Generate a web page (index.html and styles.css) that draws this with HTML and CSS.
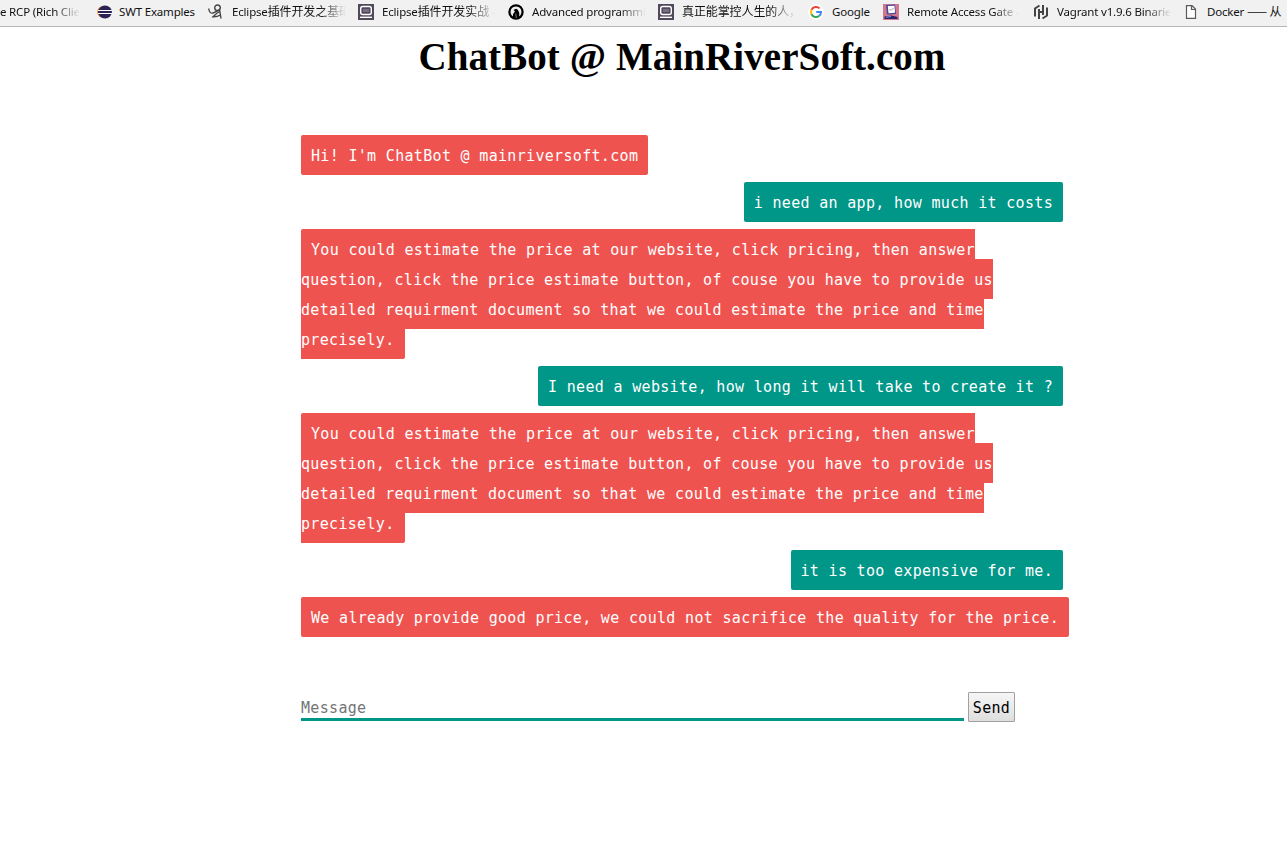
FILE: index.html
```
<!DOCTYPE html>
<html lang="en">
<head>
<meta charset="utf-8">
<title>ChatBot @ MainRiverSoft.com</title>
<link rel="stylesheet" href="styles.css">
</head>
<body>
<nav class="bookmarks">
  <a class="bookmark first"><span class="label fade">e RCP (Rich Clie</span></a>
  <a class="bookmark mid"><svg class="icon" viewBox="0 0 16 16"><ellipse cx="6.500" cy="8" rx="6.500" ry="6" fill="#f29a3c"/><ellipse cx="8" cy="8" rx="7" ry="6.500" fill="#2c2255"/><path d="M1 6.500h14M1 9.500h14" stroke="#fff" stroke-width="1.200"/></svg><span class="label">SWT Examples</span></a>
  <a class="bookmark"><svg class="icon" viewBox="0 0 16 16" fill="none" stroke="#444" stroke-width="1.400"><circle cx="9.500" cy="3.800" r="2.800"/><path d="M.7 4.500Q1.500 10 5 9Q9 7.500 11.500 5.500L13 14.500M11.500 7.500Q8 9.500 5 12.800Q9 13 12.500 11"/></svg><span class="label fade">Eclipse<b class="cjk">插件开发之基础</b></span></a>
  <a class="bookmark"><svg class="icon" viewBox="0 0 16 16"><path d="M0 0h16v16H0z" fill="#51485b"/><rect x="2.700" y="2.500" width="10.600" height="8" rx="2" fill="none" stroke="#fff" stroke-width="1.400"/><path d="M5 5h6v3H5z" fill="#766e80"/><path d="M2 13.300h12" stroke="#fff" stroke-width="1.400"/></svg><span class="label fade">Eclipse<b class="cjk">插件开发实战</b> -</span></a>
  <a class="bookmark"><svg class="icon" viewBox="0 0 16 16"><circle cx="8" cy="8" r="7.700" fill="#000"/><path d="M4.800 12.500Q1.500 9.500 3 5.500Q4.500 2.500 8 2.500Q11.500 2.500 13 5.500Q14.500 9.500 11.200 12.500Q12 9 10.500 7L9.500 5.500L8 4.800L5.500 6L7 7.500Q5 9 4.800 12.500z" fill="#eee"/><path d="M7.800 9.500L8.300 14" stroke="#777"/></svg><span class="label fade">Advanced programming</span></a>
  <a class="bookmark"><svg class="icon" viewBox="0 0 16 16"><path d="M0 0h16v16H0z" fill="#51485b"/><rect x="2.700" y="2.500" width="10.600" height="8" rx="2" fill="none" stroke="#fff" stroke-width="1.400"/><path d="M5 5h6v3H5z" fill="#766e80"/><path d="M2 13.300h12" stroke="#fff" stroke-width="1.400"/></svg><span class="label fade"><b class="cjk">真正能掌控人生的人，</b></span></a>
  <a class="bookmark short"><svg class="icon" viewBox="0 0 16 16"><circle cx="8" cy="8" r="7.800" fill="#fff"/><g fill="none" stroke-width="2"><path d="M11.600 4.400A5 5 0 0 0 3.500 5.800" stroke="#ea4335"/><path d="M3.500 5.800A5 5 0 0 0 3.500 10.200" stroke="#fbbc05"/><path d="M3.500 10.200A5 5 0 0 0 11.300 11.800" stroke="#34a853"/><path d="M11.300 11.800A5 5 0 0 0 13 8H8.200" stroke="#4285f4"/></g></svg><span class="label">Google</span></a>
  <a class="bookmark"><svg class="icon" viewBox="0 0 16 16"><path d="M0 0h16v16H0z" fill="#d4788f"/><path d="M3 1l9-.5 1 9.500-9 .5z" fill="#4a46a0"/><path d="M4.800 2l6.700-.3.500 7-6.500.5z" fill="#fff"/><path d="M6.500 5l1.500 1.500L10.500 4" fill="none" stroke="#9a9ab0"/><path d="M1.500 12.500l7-1 6 1.500v2h-13z" fill="#29246e"/><path d="M3 13.300l5-.8" stroke="#8a9be0"/></svg><span class="label fade">Remote Access Gate -</span></a>
  <a class="bookmark"><svg class="icon" viewBox="0 0 16 16" fill="none" stroke="#444" stroke-width="2"><path d="M2 12.500V4.500L6.500 1.500M6 15V5M10 1V11M14 3.500V11.500L9.500 14.500M6 8h4"/></svg><span class="label fade">Vagrant v1.9.6 Binaries</span></a>
  <a class="bookmark last"><svg class="icon" viewBox="0 0 16 16" fill="#fff" stroke="#5a5a5a" stroke-width="1.200"><path d="M3.500 1.600H9L12.500 5V14.400H3.500zM8.500 1.600V5.500H12.500"/></svg><span class="label">Docker <b class="cjk">—— 从</b></span></a>
</nav>
<main class="page">
  <h1 class="title">ChatBot @ MainRiverSoft.com</h1>
  <ul class="chat">
    <li class="message bot"><span class="bubble">Hi! I'm ChatBot @ mainriversoft.com</span></li>
    <li class="message user"><span class="bubble">i need an app, how much it costs</span></li>
    <li class="message bot"><span class="bubble">You could estimate the price at our website, click pricing, then answer<br>question, click the price estimate button, of couse you have to provide us<br>detailed requirment document so that we could estimate the price and time<br>precisely.</span></li>
    <li class="message user"><span class="bubble">I need a website, how long it will take to create it ?</span></li>
    <li class="message bot"><span class="bubble">You could estimate the price at our website, click pricing, then answer<br>question, click the price estimate button, of couse you have to provide us<br>detailed requirment document so that we could estimate the price and time<br>precisely.</span></li>
    <li class="message user"><span class="bubble">it is too expensive for me.</span></li>
    <li class="message bot"><span class="bubble">We already provide good price, we could not sacrifice the quality for the price.</span></li>
  </ul>
  <form class="composer">
    <input class="field" type="text" placeholder="Message">
    <button class="send" type="button">Send</button>
  </form>
</main>
</body>
</html>
```
FILE: styles.css
```
* { box-sizing: border-box; }
body {
  margin: 0;
  height: 844px;
  overflow: hidden;
  background: #fff;
  font-family: "DejaVu Sans Mono", monospace;
  font-size: 15px;
  letter-spacing: .32px;
}
.bookmarks {
  display: flex;
  height: 27px;
  padding-bottom: 2px;
  overflow: hidden;
  background: #f1f1f1;
  border-bottom: 1px solid #b5b5b5;
  font: 11.5px "Noto Sans", "Noto Sans CJK SC", sans-serif;
  letter-spacing: -.18px;
  color: #111;
}
.bookmark {
  display: flex;
  flex: 0 0 150px;
  align-items: center;
  gap: 8px;
  min-width: 0;
  padding-right: 12px;
  white-space: nowrap;
}
.bookmark.first { flex-basis: 97px; }
.bookmark.mid { flex-basis: 111px; padding-right: 0; gap: 6px; }
.bookmark.short { flex-basis: 75px; padding-right: 0; }
.bookmark.last { flex-basis: 105px; padding-right: 0; }
.icon { flex: none; width: 16px; height: 16px; }
.label { overflow: hidden; height: 20px; line-height: 20px; }
.fade { mask-image: linear-gradient(to right, #000 calc(100% - 26px), transparent); }
.cjk { font: 12px/18px "Noto Sans CJK SC", sans-serif; letter-spacing: -.1px; }
.page { padding-left: 301px; }
.title {
  width: 762px;
  margin: 0;
  padding-top: 8px;
  height: 114px;
  font: bold 39px/44px "Liberation Serif", serif;
  letter-spacing: .08px;
  text-align: center;
  white-space: nowrap;
}
.chat {
  width: 762px;
  margin: 0;
  padding: 0;
  list-style: none;
  color: #fff;
}
.message {
  margin-bottom: 17px;
  line-height: 30px;
  white-space: nowrap;
}
.user { text-align: right; }
.bubble { padding: 12px 10px 10px; border-radius: 2px; }
.bot .bubble { background: #ef5350; }
.user .bubble { background: #009688; }
.composer {
  display: flex;
  gap: 4px;
  padding-top: 42px;
}
.field {
  width: 663px;
  height: 29px;
  padding: 5px 0 0;
  border: 0;
  border-bottom: 3px solid #009688;
  font: inherit;
  letter-spacing: inherit;
}
.field::placeholder { color: #757575; }
.send {
  width: 47px;
  height: 30px;
  padding: 1px 0 0;
  border: 1px solid #a0a0a0;
  border-radius: 1px;
  background: linear-gradient(#f6f6f6, #dedede);
  color: #000;
  font: inherit;
  letter-spacing: inherit;
}
```
